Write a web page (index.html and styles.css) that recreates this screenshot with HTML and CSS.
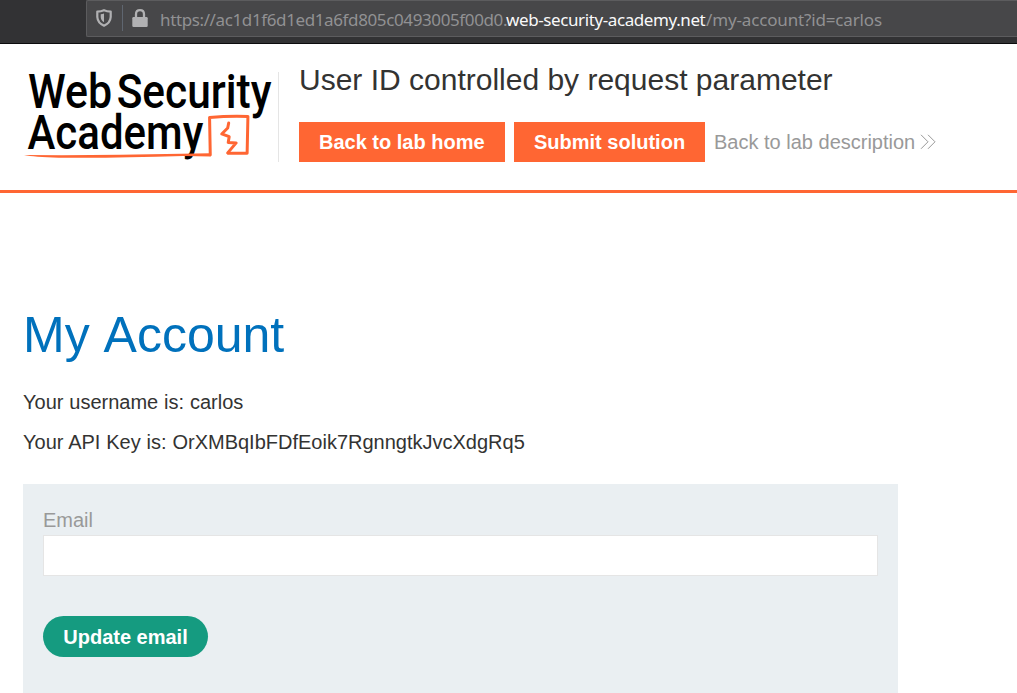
FILE: index.html
```html
<!DOCTYPE html>
<html lang="en">
<head>
<meta charset="utf-8">
<title>User ID controlled by request parameter</title>
<link rel="stylesheet" href="styles.css">
</head>
<body>
<div class="browser">
  <div class="address">
    <svg class="shield" width="16" height="18" viewBox="0 0 16 18"><path d="M1.3 2.6Q5 2.4 8 1.2Q11 2.4 14.7 2.6V8Q14.4 13.8 8 16.7Q1.6 13.8 1.3 8Z" fill="none" stroke="#b1b1b3" stroke-width="2.2" stroke-linejoin="round"/><path d="M8 4.5V13.2Q4.8 11.4 4.7 8V5.3Q6.5 5.1 8 4.5Z" fill="#b1b1b3"/></svg>
    <span class="separator"></span>
    <svg class="lock" width="16" height="18" viewBox="0 0 16 18"><rect x=".3" y="8" width="15.4" height="10" rx="1.2" fill="#b1b1b3"/><path d="M4 9V5.2Q4 1.2 8 1.2T12 5.2V9" fill="none" stroke="#b1b1b3" stroke-width="2.3"/></svg>
    <div class="url"><span class="host">https://ac1d1f6d1ed1a6fd805c0493005f00d0.</span><span class="domain">web-security-academy.net</span><span class="path">/my-account?id=carlos</span></div>
  </div>
</div>
<header class="lab-header">
  <svg class="logo" width="255" height="90" viewBox="0 0 255 90">
    <g class="logo-text">
      <text x="4" y="36" textLength="84.5" lengthAdjust="spacingAndGlyphs">Web</text>
      <text x="93" y="36" textLength="155.5" lengthAdjust="spacingAndGlyphs">Security</text>
      <text x="3.5" y="76.7" textLength="176.5" lengthAdjust="spacingAndGlyphs">Academy</text>
    </g>
    <path d="M0 83.2Q75 83.8 158 82L187 81.3L187.5 84.6L160 84.2Q85 86.5 35 85.8Q10 85.3 0 83.2Z" fill="#f63"/>
    <g fill="none" stroke="#f63" stroke-width="3" stroke-linejoin="round" stroke-linecap="round"><path d="M187 83L186.3 45.5Q206 43.8 224.8 44.5L224 81.3L205 81.3"/><path d="M205.5 51L204.5 56L198.5 62L206 64.8L205 70.5L213 71L204.5 81"/></g>
  </svg>
  <div class="lab-info">
    <h2>User ID controlled by request parameter</h2>
    <nav class="links">
      <a class="lab-button home">Back to lab home</a>
      <a class="lab-button submit">Submit solution</a>
      <a class="description">Back to lab description<svg width="16" height="16" viewBox="0 0 16 16"><path d="M1 .8L8 7.8L1 14.8M8 .8L15 7.8L8 14.8" fill="none" stroke="#999" stroke-width="1"/></svg></a>
    </nav>
  </div>
</header>
<main>
  <h1>My Account</h1>
  <p>Your username is: carlos</p>
  <p>Your API Key is: OrXMBqIbFDfEoik7RgnngtkJvcXdgRq5</p>
  <form class="email-form">
    <label for="email">Email</label>
    <input id="email" type="email">
    <button type="button">Update email</button>
  </form>
</main>
</body>
</html>
```

FILE: styles.css
```css
* { box-sizing: border-box; }
body { margin: 0; height: 693px; overflow: hidden; background: #fff; color: #333332; font: 20px/24px "Liberation Sans", Arial, sans-serif; }
.browser { height: 44px; padding-left: 86px; background: #323234; border-bottom: 1px solid #0c0c0d; }
.address { height: 37px; display: flex; align-items: center; padding: 0 0 1px 9px; background: #474749; border: 1px solid #5c5c5e; border-right: 0; border-radius: 2px 0 0 2px; }
.separator { width: 1px; height: 26px; margin: 0 9px 0 10px; background: #5f6670; }
.url { display: flex; margin-left: 12px; font: 17px/24px "Noto Sans", sans-serif; color: #919193; white-space: nowrap; padding-top: 3px; }
.host { width: 346px; letter-spacing: -.38px; }
.domain { width: 200px; color: #f9f9fa; letter-spacing: -.4px; }
.path { letter-spacing: -.15px; }
.lab-header { height: 149px; display: flex; padding: 28px 0 0 24px; border-bottom: 3px solid #f63; }
.logo { flex: none; overflow: visible; border-right: 1px solid #e5e5e5; }
.logo-text { font: 500 48px Roboto, sans-serif; fill: #000; }
.lab-info { padding-left: 20px; }
h2 { margin: -10px 0 24px; font-size: 30px; line-height: 36px; font-weight: 400; white-space: nowrap; }
.links { display: flex; align-items: center; }
.lab-button { height: 40px; line-height: 40px; padding: 0 20px; margin-right: 9px; background: #f63; color: #fff; font-weight: 700; white-space: nowrap; }
.home { width: 206px; }
.submit { width: 191px; }
.description { display: flex; align-items: center; gap: 5px; color: #999; white-space: nowrap; }
main { padding: 112px 0 0 23px; }
h1 { margin: 0 0 25px; font-size: 50px; line-height: 60px; font-weight: 400; color: #0071bc; word-spacing: 2.8px; }
p { margin: 0 0 16px; white-space: nowrap; word-spacing: .3px; }
.email-form { width: 875px; height: 220px; margin-top: 30px; padding: 24px 20px; background: #eaeff2; }
label { display: block; color: #999; }
input { display: block; width: 835px; height: 41px; margin: 3px 0 40px; border: 1px solid #e5e5e5; background: #fff; }
button { display: block; width: 165px; height: 41px; padding: 1px 0 0; border: 0; border-radius: 21px; background: #159b80; color: #fff; font: 700 20px "Liberation Sans", Arial, sans-serif; }
```
